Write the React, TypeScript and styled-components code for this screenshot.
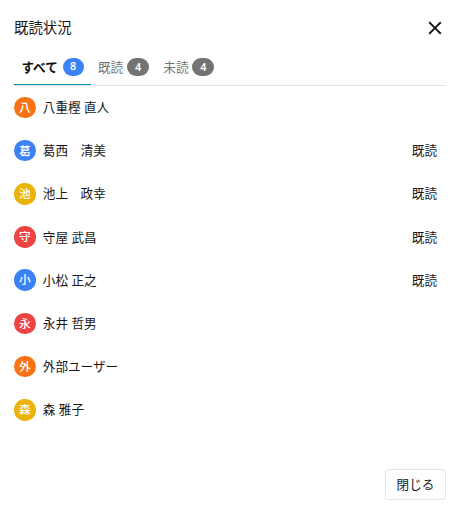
import React from 'react';
import styled, { createGlobalStyle } from 'styled-components';

const GlobalStyle = createGlobalStyle`
  *, *::before, *::after { box-sizing: border-box; }
  body {
    margin: 0;
    background: #fff;
    color: #18181b;
    font-family: "Noto Sans CJK JP", sans-serif;
    font-size: 12.6px;
  }
`;

const Dialog = styled.section`
  display: flex;
  flex-direction: column;
  height: 515px;
  padding: 14px 16px 15px 14px;
  background: #fff;
`;

const Header = styled.header`
  display: flex;
  align-items: center;
  justify-content: space-between;
  height: 28px;
`;

const Title = styled.h1`
  margin: 0;
  padding-bottom: 2px;
  font-size: 14.4px;
  font-weight: 400;
  line-height: 26px;
`;

const IconButton = styled.button`
  display: flex;
  align-items: center;
  justify-content: center;
  width: 22px;
  height: 22px;
  padding: 0;
  border: 0;
  background: none;
  color: #111;
`;

const TabList = styled.div`
  display: flex;
  flex: none;
  height: 37px;
  margin-top: 7px;
  border-bottom: 1px solid #e4e4e7;
`;

const Tab = styled.button<{ $active?: boolean }>`
  display: flex;
  align-items: center;
  gap: ${(p) => (p.$active ? 4.8 : 3.8)}px;
  height: 36px;
  padding: 0 7px 0 7.4px;
  border: 0;
  border-bottom: 1px solid ${(p) => (p.$active ? '#0891b2' : 'transparent')};
  background: none;
  color: ${(p) => (p.$active ? '#111' : '#737373')};
  font: inherit;
  font-weight: ${(p) => (p.$active ? 700 : 400)};
  line-height: 20px;
`;

const Count = styled.span<{ $active?: boolean }>`
  display: flex;
  align-items: center;
  justify-content: center;
  width: ${(p) => (p.$active ? 21 : 22)}px;
  height: 18px;
  border-radius: 9px;
  background: ${(p) => (p.$active ? '#3b82f6' : '#737373')};
  color: #fff;
  font-family: "Noto Sans", sans-serif;
  font-size: 10.8px;
  font-weight: 600;
  line-height: 18px;
  padding-bottom: ${(p) => (p.$active ? 1 : 0)}px;
`;

const MemberList = styled.ul`
  flex: 1;
  margin: -0.2px 0 0;
  padding: 0;
  list-style: none;
`;

const Member = styled.li`
  display: flex;
  align-items: center;
  height: 43.2px;
  padding-right: 9px;
`;

const Avatar = styled.span<{ $color: string }>`
  display: flex;
  align-items: center;
  justify-content: center;
  width: 21.6px;
  height: 21.6px;
  margin-right: 7.2px;
  padding-bottom: 1.5px;
  border-radius: 50%;
  background: ${(p) => p.$color};
  color: #fff;
  font-size: 11.7px;
  font-weight: 500;
  line-height: 20px;
`;

const Name = styled.span`
  flex: 1;
  padding-bottom: 0.6px;
  line-height: 20px;
  white-space: pre;
  word-spacing: 0.6px;
`;

const Status = styled.span`
  padding-bottom: 0.6px;
  line-height: 20px;
`;

const Footer = styled.footer`
  display: flex;
  justify-content: flex-end;
`;

const CloseButton = styled.button`
  width: 61px;
  height: 31px;
  padding: 0 0 2px;
  border: 1px solid #e4e4e7;
  border-radius: 4px;
  background: #fff;
  color: #18181b;
  font: inherit;
  line-height: 20px;
`;

const orange = '#f97316';
const blue = '#3b82f6';
const yellow = '#eab308';
const red = '#ef4444';

const tabs = [
  { label: 'すべて', count: 8, active: true },
  { label: '既読', count: 4 },
  { label: '未読', count: 4 },
];

const members = [
  { name: '八重樫 直人', color: orange, read: false },
  { name: '葛西\u3000清美', color: blue, read: true },
  { name: '池上\u3000政幸', color: yellow, read: true },
  { name: '守屋 武昌', color: red, read: true },
  { name: '小松 正之', color: blue, read: true },
  { name: '永井 哲男', color: red, read: false },
  { name: '外部ユーザー', color: orange, read: false },
  { name: '森 雅子', color: yellow, read: false },
];

export default function App() {
  return (
    <>
      <GlobalStyle />
      <Dialog>
        <Header>
          <Title>既読状況</Title>
          <IconButton aria-label="閉じる">
            <svg width="22" height="22" viewBox="0 0 24 24" fill="currentColor">
              <path d="M19 6.41 17.59 5 12 10.59 6.41 5 5 6.41 10.59 12 5 17.59 6.41 19 12 13.41 17.59 19 19 17.59 13.41 12z" />
            </svg>
          </IconButton>
        </Header>
        <TabList>
          {tabs.map((t) => (
            <Tab key={t.label} $active={t.active}>
              {t.label}
              <Count $active={t.active}>{t.count}</Count>
            </Tab>
          ))}
        </TabList>
        <MemberList>
          {members.map((m) => (
            <Member key={m.name}>
              <Avatar $color={m.color}>{m.name[0]}</Avatar>
              <Name>{m.name}</Name>
              {m.read && <Status>既読</Status>}
            </Member>
          ))}
        </MemberList>
        <Footer>
          <CloseButton>閉じる</CloseButton>
        </Footer>
      </Dialog>
    </>
  );
}
